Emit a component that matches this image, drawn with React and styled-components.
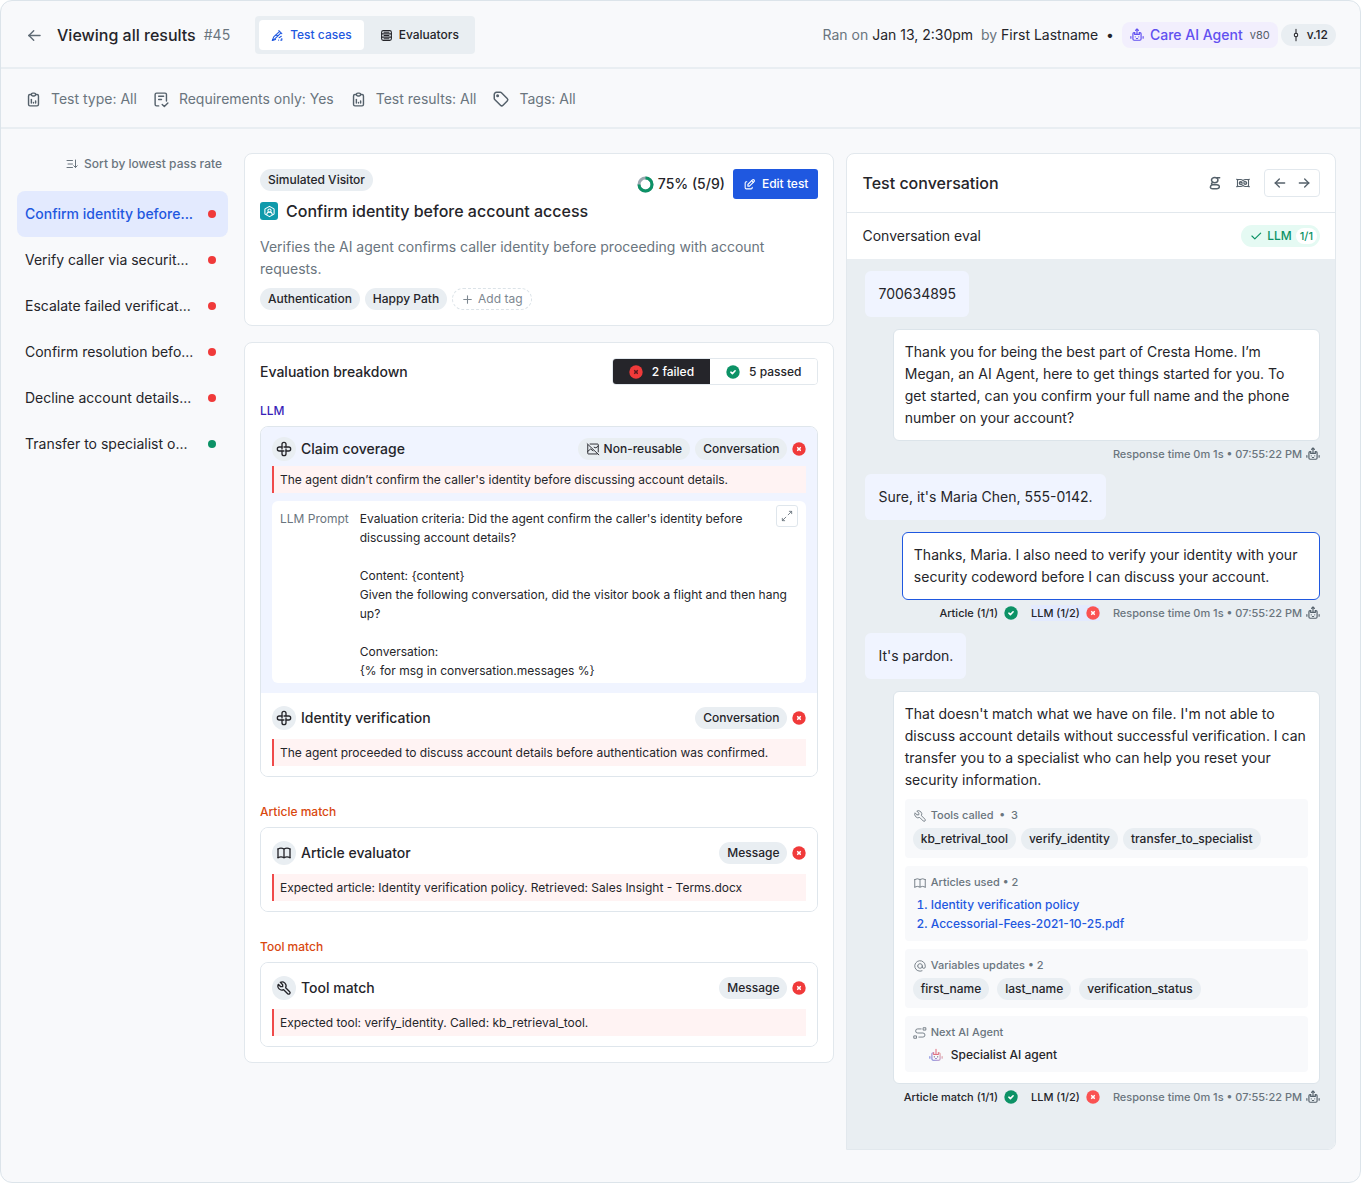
import React from "react";
import styled, { createGlobalStyle } from "styled-components";
import {
  TbArrowLeft,
  TbArrowRight,
  TbArrowsDiagonal,
  TbAt,
  TbBook,
  TbCheck,
  TbEdit,
  TbPlus,
  TbReportAnalytics,
  TbTag,
  TbTool
} from "react-icons/tb";

const GlobalStyle = createGlobalStyle`
  * {
    box-sizing: border-box;
  }

  body {
    margin: 0;
    background-color: #ffffff;
    font-family: Inter, "Liberation Sans", sans-serif;
    font-size: 14px;
    line-height: 22px;
    color: #25252a;
  }

  button {
    font: inherit;
    color: inherit;
    background: none;
    border: none;
    padding: 0;
    cursor: pointer;
  }

  h1, h2, h3, h4, p, ul, ol {
    margin: 0;
    padding: 0;
    font-weight: 500;
  }

  svg {
    display: block;
    flex-shrink: 0;
  }
`;

/* Icons */

function Icon({ size = 16, weight = 2, stroke = "currentColor", children }) {
  return (
    <svg
      width={size}
      height={size}
      viewBox="0 0 24 24"
      fill="none"
      stroke={stroke}
      strokeWidth={weight}
      strokeLinecap="round"
      strokeLinejoin="round"
      aria-hidden="true"
    >
      {children}
    </svg>
  );
}

function RobotIcon(props) {
  return (
    <Icon {...props}>
      <path d="M8 8H7a2 2 0 0 0-2 2v9a2 2 0 0 0 2 2h10a2 2 0 0 0 2-2v-9a2 2 0 0 0-2-2h-1" />
      <path d="M12 1.500V11M9.500 4L12 1.500 14.500 4M8 8v3h8V8" />
      <path d="M1.500 14.500v3M22.500 14.500v3M9 15v.2M15 15v.2M11 18h2" />
    </Icon>
  );
}

function GradientRobotIcon({ size }) {
  return (
    <svg
      width={size}
      height={size}
      viewBox="0 0 24 24"
      fill="none"
      stroke="url(#robot-fade)"
      strokeWidth="1.8"
      strokeLinecap="round"
      strokeLinejoin="round"
      aria-hidden="true"
    >
      <defs>
        <linearGradient
          id="robot-fade"
          gradientUnits="userSpaceOnUse"
          x1="3"
          y1="20"
          x2="21"
          y2="6"
        >
          <stop offset="0" stopColor="#6f7ddb" />
          <stop offset="0.5" stopColor="#b58bc4" />
          <stop offset="1" stopColor="#f2a48c" />
        </linearGradient>
      </defs>
      <path d="M8 8H7a2 2 0 0 0-2 2v9a2 2 0 0 0 2 2h10a2 2 0 0 0 2-2v-9a2 2 0 0 0-2-2h-1" />
      <path d="M12 2v9M8 8v3h8V8" stroke="#e0707f" />
      <path d="M1.500 14.500v3M22.500 14.500v3M11 18h2" />
      <path d="M9 15v.2M15 15v.2" stroke="#33334d" />
    </svg>
  );
}

function TestTubeIcon(props) {
  return (
    <Icon {...props}>
      <path d="M14.500 3l5.500 5.500M18.500 7L8 17.500 2.500 21 5 14.500 16 4.500" />
      <path d="M8.500 11.500l5 .5M2.500 21l6-1.500M15 16l4-2.500M14 20.500h.1M20 17.500v3h-2" />
    </Icon>
  );
}

function StackIcon(props) {
  return (
    <Icon {...props}>
      <rect x="3" y="3" width="18" height="18" rx="3" />
      <path d="M3 9h18M3 15h18M7.500 6h9M7.500 12h9M7.500 18h9" />
    </Icon>
  );
}

function CommitIcon(props) {
  return (
    <Icon {...props}>
      <circle cx="12" cy="12" r="3" />
      <path d="M12 2v7M12 15v7" />
    </Icon>
  );
}

function RequirementsIcon(props) {
  return (
    <Icon {...props}>
      <path d="M8 21H5a2 2 0 0 1-2-2V5a2 2 0 0 1 2-2h12a2 2 0 0 1 2 2v9" />
      <path d="M8 7.500h7M8 12h4M13 19l3 3 5-5" />
    </Icon>
  );
}

function SortIcon(props) {
  return (
    <Icon {...props}>
      <path d="M2 5h11M4 12h9M2 19h11M19 4v15M15.500 15.500L19 19l3.500-3.500" />
    </Icon>
  );
}

function VisitorIcon(props) {
  return (
    <Icon {...props}>
      <path d="M12 2.500l7.500 4.200a2 2 0 0 1 1 1.700v7.200a2 2 0 0 1-1 1.700L12 21.500l-7.500-4.200a2 2 0 0 1-1-1.700V8.400a2 2 0 0 1 1-1.700z" />
      <circle cx="12" cy="10.500" r="3" />
      <path d="M7 17.500a5 4.500 0 0 1 10 0" />
    </Icon>
  );
}

function PinwheelIcon(props) {
  return (
    <Icon {...props}>
      <path d="M9 12V5a3 3 0 0 1 6 0v4" />
      <path d="M12 9h7a3 3 0 0 1 0 6h-4" />
      <path d="M15 12v7a3 3 0 0 1-6 0v-4" />
      <path d="M12 15H5a3 3 0 0 1 0-6h4" />
    </Icon>
  );
}

function NoReuseIcon(props) {
  return (
    <Icon {...props}>
      <path d="M7 3.500h13a1 1 0 0 1 1 1V17M19 20.500H4a1 1 0 0 1-1-1V5" />
      <path d="M2 3l20 19M3 16l5-4 4 3M14 9l3 1 4-3" />
    </Icon>
  );
}

function GlyphIcon(props) {
  return (
    <Icon {...props}>
      <ellipse cx="11.500" cy="7" rx="5.500" ry="4.500" />
      <path d="M16 3h4M8 11c-3 1-2.500 4 1 4h6c6 0 6 7-.500 7H8c-5.500 0-5-6 0-7" />
    </Icon>
  );
}

function MaskIcon(props) {
  return (
    <Icon {...props}>
      <path d="M1 5.500c2 1.300 4 .5 6.500.5 2 0 3.500.7 4.500 2 1-1.300 2.500-2 4.500-2 2.500 0 4.500.8 6.500-.5" />
      <path d="M1 18.500c2-1.300 4-.5 6.500-.5 2 0 3.500-.7 4.500-2 1 1.300 2.500 2 4.500 2 2.500 0 4.500-.8 6.500.5" />
      <path d="M2.500 7v10M21.500 7v10" />
      <path d="M5.500 12h5.200c0-3.200-5.200-3.200-5.200 0s3.700 3.400 5.200 2" />
      <path d="M18.500 12h-5.200c0 3.200 5.200 3.200 5.200 0s-3.700-3.400-5.200-2" />
    </Icon>
  );
}

function RouteIcon(props) {
  return (
    <Icon {...props}>
      <path d="M2 17h4v4H2zM18 3h4v4h-4z" />
      <path d="M10 19h7a3.500 3.500 0 0 0 0-7H8a3.500 3.500 0 0 1 0-7h6" />
    </Icon>
  );
}

function StatusIcon({ failed, size = 14, fill, mark = "#ffffff" }) {
  return (
    <svg
      width={size}
      height={size}
      viewBox="0 0 14 14"
      fill="none"
      role="img"
      aria-label={failed ? "Failed" : "Passed"}
    >
      <circle cx="7" cy="7" r="6.700" fill={fill || (failed ? "#f03a3a" : "#0c9266")} />
      <path
        d={failed ? "M5.700 5.700l2.600 2.600M8.300 5.700l-2.600 2.600" : "M4.900 7.200l1.500 1.400 2.700-2.800"}
        stroke={mark}
        strokeWidth="1.600"
        strokeLinecap="round"
        strokeLinejoin="round"
      />
    </svg>
  );
}

function RingIcon() {
  return (
    <svg width="17" height="17" viewBox="0 0 17 17" fill="none" aria-hidden="true">
      <circle cx="8.500" cy="8.500" r="6.500" stroke="#9aa7b0" strokeWidth="3" />
      <circle
        cx="8.500"
        cy="8.500"
        r="6.500"
        stroke="#0c9266"
        strokeWidth="3"
        pathLength="100"
        strokeDasharray="75 25"
        transform="rotate(-90 8.500 8.500)"
      />
    </svg>
  );
}

/* Page */

const Page = styled.div`
  min-height: 100vh;
  display: flex;
  flex-direction: column;
  background-color: #f8f9fb;
  border: 1px solid #dce4ea;
  border-radius: 12px;
`;

const Header = styled.header`
  display: flex;
  align-items: center;
  justify-content: space-between;
  height: 68px;
  padding: 2px 24px 0;
  border-bottom: 2px solid #e9eef2;
`;

const HeaderSide = styled.div`
  display: flex;
  align-items: center;
`;

const BackButton = styled.button`
  display: flex;
  margin-right: 13px;
  color: #5f6b75;
`;

const PageTitle = styled.h1`
  font-size: 16px;
  font-weight: 500;
`;

const RunNumber = styled.span`
  margin: 0 25px 0 8px;
  color: #6a757e;
`;

const Tabs = styled.div`
  display: flex;
  gap: 4px;
  padding: 4px;
  background-color: #e9eef2;
  border-radius: 4px;
`;

const Tab = styled.button`
  display: flex;
  align-items: center;
  gap: 6px;
  height: 30px;
  padding: 0 12px;
  font-size: 12px;
  font-weight: 500;
  border-radius: 4px;
  color: ${props => (props.$active ? "#1f58e0" : "#25252a")};
  background-color: ${props => (props.$active ? "#ffffff" : "transparent")};
`;

const RunInfo = styled.p`
  margin-right: 8px;
  font-weight: 400;
  white-space: pre;
  color: #6a757e;

  strong {
    font-weight: 400;
    color: #25252a;
  }
`;

const AgentTag = styled.span`
  display: flex;
  align-items: center;
  gap: 6px;
  height: 26px;
  margin-right: 3px;
  padding: 0 8px;
  font-weight: 500;
  color: #6150f0;
  background-color: #f2effd;
  border-radius: 8px;

  small {
    margin-left: 1px;
    font-size: 11px;
    font-weight: 400;
    color: #55606a;
  }
`;

const Pill = styled.span`
  display: flex;
  align-items: center;
  gap: 4px;
  width: fit-content;
  height: 22px;
  padding: 0 8px;
  font-size: 12px;
  font-weight: 500;
  white-space: nowrap;
  background-color: #e9eef2;
  border-radius: 11px;
`;

const Filters = styled.nav`
  display: flex;
  align-items: center;
  gap: 16px;
  height: 60px;
  padding: 2px 24px 0;
  border-bottom: 2px solid #e9eef2;
`;

const Filter = styled.button`
  display: flex;
  align-items: center;
  gap: 9px;
  color: #6a757e;

  svg {
    color: #55616b;
  }
`;

const Body = styled.main`
  flex: 1;
  display: flex;
  padding: 24px 24px 32px 16px;
`;

/* Sidebar */

const Sidebar = styled.aside`
  flex: 0 0 211px;
  margin-right: 16px;
`;

const SortButton = styled.button`
  display: flex;
  align-items: center;
  gap: 6px;
  margin: 0 6px 16px auto;
  font-size: 12px;
  font-weight: 500;
  color: #6a757e;
`;

const CaseItem = styled.button`
  display: flex;
  align-items: center;
  justify-content: space-between;
  width: 100%;
  height: 46px;
  padding: 0 12px 0 8px;
  border-radius: 8px;
  font-weight: ${props => (props.$active ? 500 : 400)};
  color: ${props => (props.$active ? "#1f58e0" : "#25252a")};
  background-color: ${props => (props.$active ? "#e3eafe" : "transparent")};
`;

const Dot = styled.span`
  width: 8px;
  height: 8px;
  border-radius: 50%;
  background-color: ${props => (props.$passed ? "#0c9266" : "#f03a3a")};
`;

/* Test details */

const Details = styled.div`
  flex: 591 1 0;
  min-width: 0;
  display: flex;
  flex-direction: column;
  align-items: stretch;
  gap: 16px;
  margin-right: 12px;
`;

const Card = styled.section`
  padding: 15px;
  background-color: #ffffff;
  border: 1px solid #e2e8ed;
  border-radius: 8px;
`;

const Row = styled.div`
  display: flex;
  align-items: ${props => props.$align || "center"};
  justify-content: space-between;
`;

const TestTitle = styled.h2`
  display: flex;
  align-items: center;
  gap: 8px;
  margin: 9px 0 14px;
  font-size: 16px;
  line-height: 22px;
  font-weight: 500;
`;

const VisitorBadge = styled.span`
  display: flex;
  align-items: center;
  justify-content: center;
  width: 18px;
  height: 18px;
  color: #ffffff;
  background-color: #0f9aab;
  border-radius: 3px;
`;

const Actions = styled.div`
  display: flex;
  align-items: center;
  gap: 8px;
`;

const Score = styled.span`
  display: flex;
  align-items: center;
  gap: 4px;
  font-weight: 500;
`;

const EditButton = styled.button`
  display: flex;
  align-items: center;
  gap: 6px;
  height: 30px;
  padding: 0 10px;
  font-size: 12px;
  font-weight: 500;
  color: #ffffff;
  background-color: #1f58e0;
  border-radius: 3px;
`;

const Description = styled.p`
  margin-bottom: 8px;
  font-weight: 400;
  color: #6a757e;
`;

const Tags = styled.div`
  display: flex;
  flex-wrap: wrap;
  gap: ${props => props.$gap || 5}px;
`;

const AddTag = styled.button`
  display: flex;
  align-items: center;
  gap: 4px;
  height: 22px;
  padding: 0 8px;
  font-size: 12px;
  color: #7d8790;
  border: 1px dashed #dce3e8;
  border-radius: 11px;
`;

/* Evaluation breakdown */

const CardTitle = styled.h3`
  font-size: 14px;
  font-weight: 500;
`;

const Toggle = styled.div`
  display: flex;
  height: 27px;
  overflow: hidden;
  border: 1px solid #e2e8ed;
  border-radius: 4px;
`;

const ToggleButton = styled.button`
  display: flex;
  align-items: center;
  gap: 9px;
  padding: 0 16px;
  font-size: 12px;
  font-weight: 500;
  color: ${props => (props.$active ? "#ffffff" : "#25252a")};
  background-color: ${props => (props.$active ? "#25252a" : "#ffffff")};
`;

const GroupLabel = styled.h4`
  margin: ${props => (props.$first ? 16 : 25)}px 0 5px;
  font-size: 12px;
  line-height: 20px;
  font-weight: 500;
  color: ${props => props.$color};
`;

const Group = styled.div`
  overflow: hidden;
  border: 1px solid #dfe6ec;
  border-radius: 8px;
`;

const Evaluator = styled.article`
  padding: ${props => (props.$open ? "10px 11px" : "13px 11px 10px")};
  background-color: ${props => (props.$open ? "#f0f4ff" : "#ffffff")};
`;

const EvaluatorName = styled.h4`
  display: flex;
  align-items: center;
  gap: 5px;
  font-size: 14px;
`;

const RoundIcon = styled.span`
  display: flex;
  align-items: center;
  justify-content: center;
  width: 24px;
  height: 24px;
  background-color: #e9eef2;
  border-radius: 50%;
`;

const EvaluatorTags = styled.div`
  display: flex;
  align-items: center;
  gap: 5px;
`;

const Reason = styled.p`
  margin-top: ${props => (props.$open ? 5 : 9)}px;
  padding: 4px 6px;
  font-size: 12px;
  line-height: 19px;
  font-weight: 400;
  background-color: #fff3f3;
  border-left: 2px solid #f04a4a;
`;

const PromptFrame = styled.div`
  position: relative;
`;

const Prompt = styled.div`
  display: flex;
  gap: 11px;
  margin-top: 8px;
  padding: 8px 8px 3px;
  font-size: 12px;
  line-height: 19px;
  background-color: #ffffff;
  border-radius: 6px;
`;

const PromptLabel = styled.span`
  white-space: nowrap;
  color: #6a757e;
`;

const PromptText = styled.div`
  flex: 1;
  white-space: pre-wrap;
`;

const PromptLead = styled.p`
  max-width: 400px;
  font-weight: 400;
`;

const ExpandButton = styled.button`
  position: absolute;
  top: 4px;
  right: 8px;
  display: flex;
  align-items: center;
  justify-content: center;
  width: 22px;
  height: 22px;
  color: #6a757e;
  background-color: #ffffff;
  border: 1px solid #dfe6ec;
  border-radius: 3px;
`;

/* Conversation */

const Panel = styled.section`
  flex: 488 1 0;
  min-width: 0;
  display: flex;
  flex-direction: column;
  overflow: hidden;
  background-color: #ffffff;
  border: 1px solid #e2e8ed;
  border-radius: 8px 8px 8px 0;
`;

const PanelHeader = styled.div`
  display: flex;
  align-items: center;
  justify-content: space-between;
  height: 59px;
  padding: 0 15px;
  border-bottom: 1px solid #e2e8ed;
`;

const PanelTitle = styled.h2`
  font-size: 16px;
  font-weight: 500;
`;

const PanelTools = styled.div`
  display: flex;
  align-items: center;
  gap: 14px;
  color: #55616b;
`;

const IconButton = styled.button`
  display: flex;
`;

const Pager = styled.div`
  display: flex;
  align-items: center;
  gap: 8px;
  height: 28px;
  padding: 0 7px;
  border: 1px solid #e2e8ed;
  border-radius: 4px;
`;

const EvalRow = styled.div`
  display: flex;
  align-items: center;
  justify-content: space-between;
  height: 46px;
  padding: 0 15px;
`;

const LlmPill = styled(Pill)`
  padding-right: 3px;
  color: #0c9266;
  background-color: #e5faf3;

  b {
    padding: 0 4px;
    font-size: 11px;
    line-height: 16px;
    font-weight: 500;
    background-color: #ffffff;
    border-radius: 8px;
  }
`;

const Messages = styled.div`
  flex: 1;
  display: flex;
  flex-direction: column;
  align-items: flex-end;
  gap: 12px;
  padding: 12px 15px 40px 18px;
  background-color: #e9eef2;
`;

const VisitorBubble = styled.p`
  align-self: flex-start;
  padding: 12px 13px;
  font-weight: 400;
  background-color: #f0f4ff;
  border-radius: 6px;
`;

const Turn = styled.div`
  display: flex;
  flex-direction: column;
  align-items: flex-end;
  gap: 5px;
`;

const AgentBubble = styled.div`
  width: ${props => props.$width || "94%"};
  padding: 11px;
  background-color: #ffffff;
  border: 1px solid ${props => (props.$selected ? "#1f58e0" : "#dce4ea")};
  border-radius: 6px;
`;

const Meta = styled.div`
  display: flex;
  align-items: center;
  gap: 13px;
  font-size: 11px;
  line-height: 16px;
  font-weight: 500;
  white-space: nowrap;
`;

const MetaResult = styled.span`
  display: flex;
  align-items: center;
  gap: 6px;
  background-color: ${props => (props.$marked ? "#e3eafe" : "transparent")};
`;

const MetaTime = styled.span`
  display: flex;
  align-items: center;
  gap: 4px;
  color: #6a757e;

  svg {
    color: #55616b;
  }
`;

const Trace = styled.section`
  margin-top: 8px;
  padding: 8px;
  background-color: #f8f9fb;
  border-radius: 4px;
`;

const TraceTitle = styled.h4`
  display: flex;
  align-items: center;
  gap: 4px;
  margin-bottom: 4px;
  font-size: 11px;
  line-height: 17px;
  font-weight: 500;
  white-space: pre;
  color: #6a757e;
`;

const ArticleList = styled.ol`
  padding-left: 18px;
  font-size: 12px;
  line-height: 19px;
  font-weight: 500;
  color: #1f58e0;

  a {
    color: inherit;
    text-decoration: none;
  }
`;

const NextAgent = styled.p`
  display: flex;
  align-items: center;
  gap: 8px;
  padding-left: 16px;
  font-size: 12px;
  line-height: 19px;
`;

const cases = [
  { title: "Confirm identity before...", active: true },
  { title: "Verify caller via securit..." },
  { title: "Escalate failed verificat..." },
  { title: "Confirm resolution befo..." },
  { title: "Decline account details..." },
  { title: "Transfer to specialist o...", passed: true }
];

const promptBody = `
Content: {content}
Given the following conversation, did the visitor book a flight and then hang up?

Conversation:
{% for msg in conversation.messages %}`;

function EvaluatorRow({ icon, name, scope, reason, reusable = true, open, children }) {
  return (
    <Evaluator $open={open}>
      <Row>
        <EvaluatorName>
          <RoundIcon>{icon}</RoundIcon>
          {name}
        </EvaluatorName>
        <EvaluatorTags>
          {!reusable && (
            <Pill>
              <NoReuseIcon size={14} weight={1.6} />
              Non-reusable
            </Pill>
          )}
          <Pill>{scope}</Pill>
          <StatusIcon failed />
        </EvaluatorTags>
      </Row>
      <Reason $open={open}>{reason}</Reason>
      {children}
    </Evaluator>
  );
}

function MessageMeta({ article, llm, marked }) {
  return (
    <Meta>
      {article && (
        <MetaResult>
          {article}
          <StatusIcon />
        </MetaResult>
      )}
      {llm && (
        <MetaResult $marked={marked}>
          {llm}
          <StatusIcon failed fill="#fa5252" />
        </MetaResult>
      )}
      <MetaTime>
        Response time 0m 1s • 07:55:22 PM
        <RobotIcon size={14} />
      </MetaTime>
    </Meta>
  );
}

function Conversation() {
  return (
    <Panel>
      <PanelHeader>
        <PanelTitle>Test conversation</PanelTitle>
        <PanelTools>
          <IconButton aria-label="Glossary">
            <GlyphIcon size={14} weight={2.6} />
          </IconButton>
          <IconButton aria-label="Redaction">
            <MaskIcon size={14} weight={1.8} />
          </IconButton>
          <Pager>
            <IconButton aria-label="Previous test">
              <TbArrowLeft size={16} />
            </IconButton>
            <IconButton aria-label="Next test">
              <TbArrowRight size={16} />
            </IconButton>
          </Pager>
        </PanelTools>
      </PanelHeader>
      <EvalRow>
        <span>Conversation eval</span>
        <LlmPill>
          <TbCheck size={14} />
          LLM
          <b>1/1</b>
        </LlmPill>
      </EvalRow>
      <Messages>
        <VisitorBubble>700634895</VisitorBubble>
        <Turn>
          <AgentBubble>
            Thank you for being the best part of Cresta Home. I’m Megan, an AI Agent, here to get
            things started for you. To get started, can you confirm your full name and the phone
            number on your account?
          </AgentBubble>
          <MessageMeta />
        </Turn>
        <VisitorBubble>Sure, it's Maria Chen, 555-0142.</VisitorBubble>
        <Turn>
          <AgentBubble $width="92%" $selected>
            Thanks, Maria. I also need to verify your identity with your security codeword before I
            can discuss your account.
          </AgentBubble>
          <MessageMeta article="Article (1/1)" llm="LLM (1/2)" marked />
        </Turn>
        <VisitorBubble>It's pardon.</VisitorBubble>
        <Turn>
          <AgentBubble>
            That doesn't match what we have on file. I'm not able to discuss account details without
            successful verification. I can transfer you to a specialist who can help you reset your
            security information.
            <Trace>
              <TraceTitle>
                <TbTool size={14} strokeWidth={1.5} />
                Tools called  •  3
              </TraceTitle>
              <Tags>
                <Pill>kb_retrival_tool</Pill>
                <Pill>verify_identity</Pill>
                <Pill>transfer_to_specialist</Pill>
              </Tags>
            </Trace>
            <Trace>
              <TraceTitle>
                <TbBook size={14} strokeWidth={1.5} />
                Articles used • 2
              </TraceTitle>
              <ArticleList>
                <li>
                  <a href="#identity-verification-policy">Identity verification policy</a>
                </li>
                <li>
                  <a href="#accessorial-fees">Accessorial-Fees-2021-10-25.pdf</a>
                </li>
              </ArticleList>
            </Trace>
            <Trace>
              <TraceTitle>
                <TbAt size={14} strokeWidth={1.5} />
                Variables updates • 2
              </TraceTitle>
              <Tags $gap={8}>
                <Pill>first_name</Pill>
                <Pill>last_name</Pill>
                <Pill>verification_status</Pill>
              </Tags>
            </Trace>
            <Trace>
              <TraceTitle>
                <RouteIcon size={14} weight={1.5} />
                Next AI Agent
              </TraceTitle>
              <NextAgent>
                <GradientRobotIcon size={14} />
                Specialist AI agent
              </NextAgent>
            </Trace>
          </AgentBubble>
          <MessageMeta article="Article match (1/1)" llm="LLM (1/2)" />
        </Turn>
      </Messages>
    </Panel>
  );
}

function App() {
  return (
    <Page>
      <GlobalStyle />
      <Header>
        <HeaderSide>
          <BackButton aria-label="Back">
            <TbArrowLeft size={19} strokeWidth={1.8} />
          </BackButton>
          <PageTitle>Viewing all results</PageTitle>
          <RunNumber>#45</RunNumber>
          <Tabs>
            <Tab $active>
              <TestTubeIcon size={13} />
              Test cases
            </Tab>
            <Tab>
              <StackIcon size={13} />
              Evaluators
            </Tab>
          </Tabs>
        </HeaderSide>
        <HeaderSide>
          <RunInfo>
            Ran on <strong>Jan 13, 2:30pm</strong>  by <strong>First Lastname  •</strong>
          </RunInfo>
          <AgentTag>
            <RobotIcon size={14} />
            Care AI Agent
            <small>v80</small>
          </AgentTag>
          <Pill>
            <CommitIcon size={14} weight={1.8} />
            v.12
          </Pill>
        </HeaderSide>
      </Header>
      <Filters>
        <Filter>
          <TbReportAnalytics size={17} />
          Test type: All
        </Filter>
        <Filter>
          <RequirementsIcon size={17} />
          Requirements only: Yes
        </Filter>
        <Filter>
          <TbReportAnalytics size={17} />
          Test results: All
        </Filter>
        <Filter>
          <TbTag size={18} />
          Tags: All
        </Filter>
      </Filters>
      <Body>
        <Sidebar>
          <SortButton>
            <SortIcon size={12} />
            Sort by lowest pass rate
          </SortButton>
          {cases.map(({ title, active, passed }) => (
            <CaseItem key={title} $active={active}>
              {title}
              <Dot $passed={passed} />
            </CaseItem>
          ))}
        </Sidebar>
        <Details>
          <Card>
            <Row $align="flex-start">
              <div>
                <Pill>Simulated Visitor</Pill>
                <TestTitle>
                  <VisitorBadge>
                    <VisitorIcon size={13} />
                  </VisitorBadge>
                  Confirm identity before account access
                </TestTitle>
              </div>
              <Actions>
                <Score>
                  <RingIcon />
                  75% (5/9)
                </Score>
                <EditButton>
                  <TbEdit size={13} />
                  Edit test
                </EditButton>
              </Actions>
            </Row>
            <Description>
              Verifies the AI agent confirms caller identity before proceeding with account
              requests.
            </Description>
            <Tags>
              <Pill>Authentication</Pill>
              <Pill>Happy Path</Pill>
              <AddTag>
                <TbPlus size={13} />
                Add tag
              </AddTag>
            </Tags>
          </Card>
          <Card>
            <Row>
              <CardTitle>Evaluation breakdown</CardTitle>
              <Toggle>
                <ToggleButton $active>
                  <StatusIcon failed mark="#5c1a1f" />
                  2 failed
                </ToggleButton>
                <ToggleButton>
                  <StatusIcon />
                  5 passed
                </ToggleButton>
              </Toggle>
            </Row>
            <GroupLabel $first $color="#3a1fb8">
              LLM
            </GroupLabel>
            <Group>
              <EvaluatorRow
                open
                icon={<PinwheelIcon size={16} />}
                name="Claim coverage"
                scope="Conversation"
                reusable={false}
                reason="The agent didn’t confirm the caller's identity before discussing account details."
              >
                <PromptFrame>
                  <Prompt>
                    <PromptLabel>LLM Prompt</PromptLabel>
                    <PromptText>
                      <PromptLead>
                        Evaluation criteria: Did the agent confirm the caller's identity before
                        discussing account details?
                      </PromptLead>
                      {promptBody}
                    </PromptText>
                  </Prompt>
                  <ExpandButton aria-label="Expand prompt">
                    <TbArrowsDiagonal size={14} strokeWidth={1.5} />
                  </ExpandButton>
                </PromptFrame>
              </EvaluatorRow>
              <EvaluatorRow
                icon={<PinwheelIcon size={16} />}
                name="Identity verification"
                scope="Conversation"
                reason="The agent proceeded to discuss account details before authentication was confirmed."
              />
            </Group>
            <GroupLabel $color="#d9480f">Article match</GroupLabel>
            <Group>
              <EvaluatorRow
                icon={<TbBook size={16} />}
                name="Article evaluator"
                scope="Message"
                reason="Expected article: Identity verification policy. Retrieved: Sales Insight - Terms.docx"
              />
            </Group>
            <GroupLabel $color="#d9480f">Tool match</GroupLabel>
            <Group>
              <EvaluatorRow
                icon={<TbTool size={16} />}
                name="Tool match"
                scope="Message"
                reason="Expected tool: verify_identity. Called: kb_retrieval_tool."
              />
            </Group>
          </Card>
        </Details>
        <Conversation />
      </Body>
    </Page>
  );
}

export default App;
